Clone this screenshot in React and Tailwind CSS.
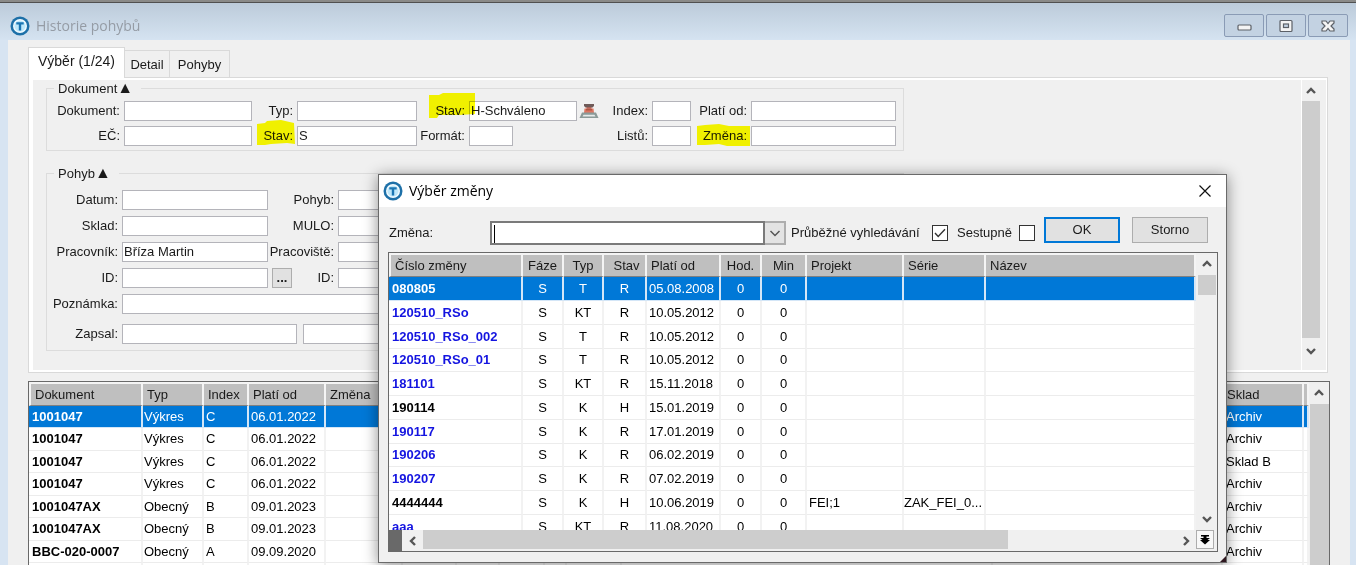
import React, { useState } from 'react';
import clsx from 'clsx';

const DOCUMENTS = [
  { code: '1001047', type: 'Výkres', index: 'C', date: '06.01.2022', store: 'Archiv' },
  { code: '1001047', type: 'Výkres', index: 'C', date: '06.01.2022', store: 'Archiv' },
  { code: '1001047', type: 'Výkres', index: 'C', date: '06.01.2022', store: 'Sklad B' },
  { code: '1001047', type: 'Výkres', index: 'C', date: '06.01.2022', store: 'Archiv' },
  { code: '1001047AX', type: 'Obecný', index: 'B', date: '09.01.2023', store: 'Archiv' },
  { code: '1001047AX', type: 'Obecný', index: 'B', date: '09.01.2023', store: 'Archiv' },
  { code: 'BBC-020-0007', type: 'Obecný', index: 'A', date: '09.09.2020', store: 'Archiv' },
  { code: '', type: '', index: '', date: '', store: '' },
];

const CHANGES = [
  { code: '080805', type: 'T', state: 'R', date: '05.08.2008' },
  { code: '120510_RSo', type: 'KT', state: 'R', date: '10.05.2012' },
  { code: '120510_RSo_002', type: 'T', state: 'R', date: '10.05.2012' },
  { code: '120510_RSo_01', type: 'T', state: 'R', date: '10.05.2012' },
  { code: '181101', type: 'KT', state: 'R', date: '15.11.2018' },
  { code: '190114', type: 'K', state: 'H', date: '15.01.2019' },
  { code: '190117', type: 'K', state: 'R', date: '17.01.2019' },
  { code: '190206', type: 'K', state: 'R', date: '06.02.2019' },
  { code: '190207', type: 'K', state: 'R', date: '07.02.2019' },
  { code: '4444444', type: 'K', state: 'H', date: '10.06.2019', project: 'FEI;1', series: 'ZAK_FEI_0...' },
  { code: 'aaa', type: 'KT', state: 'R', date: '11.08.2020' },
];

const Logo = () => (
  <svg viewBox="0 0 20 20" className="h-5 w-5 shrink-0">
    <circle cx="10" cy="10" r="9.5" fill="#1d70a8" />
    <circle cx="10" cy="10" r="7" fill="#f2fbff" />
    <circle cx="10" cy="10" r="5.6" fill="#bfe8fa" />
    <path d="M6.3 6.2h7.4v2.2h-2.5v6H8.8v-6H6.3z" fill="#1b76b3" />
  </svg>
);

const Arrow = ({ dir }) => {
  const paths = {
    up: 'M2 8 6 4l4 4',
    down: 'M2 4l4 4 4-4',
    left: 'M8 2 4 6l4 4',
    right: 'M4 2l4 4-4 4',
  };
  return (
    <svg viewBox="0 0 12 12" className="h-3 w-3" fill="none" stroke="#555" strokeWidth="2.4">
      <path d={paths[dir]} />
    </svg>
  );
};

const Stamp = () => (
  <svg viewBox="0 0 20 18" className="h-[18px] w-5">
    <path d="M5 2h10v2l-1.500 1.500h-7L5 4z" fill="#6f5a58" />
    <path d="M7.500 5h5v2h-5z" fill="#a8645a" />
    <path d="M5.500 6.500h9l.5 4.500H5z" fill="#dd7560" />
    <path d="M7 7.800h6" stroke="#a5503f" strokeWidth="1.200" />
    <path d="M3 10.500h14L19.500 16H.5z" fill="#8b9a98" />
    <path d="M4.500 12.800h11l1 1.700h-13z" fill="#e6eaea" />
  </svg>
);

// marker pen strokes laid over a label
const MARKS = {
  stavS: { box: '0 0 38 25', path: 'M0 4 8 3 10 1 24 0 37 3 38 24 30 23 14 24 8 25 0 25z', cls: 'left-[5px] -top-1.5 h-[25px] w-[38px]' },
  stavH: { box: '0 0 46 25', path: 'M0 2 10 2 14 0 46 0 46 21 30 22 10 22 8 25 0 25z', cls: 'left-3 -top-2 h-[25px] w-[46px]' },
  change: { box: '0 0 53 23', path: 'M0 2 8 1 22 0 32 2 53 2 53 22 42 22 30 22 22 20 8 21 0 21z', cls: 'left-1.5 -top-0.5 h-[23px] w-[53px]' },
};

const Field = ({ id, label, value = '', mark, className }) => (
  <>
    <label htmlFor={id} className="relative pr-1 text-right leading-5 whitespace-nowrap">
      {label}
      {mark && (
        <svg viewBox={MARKS[mark].box} className={clsx('absolute z-10 mix-blend-multiply', MARKS[mark].cls)}>
          <path d={MARKS[mark].path} fill="#ffff00" />
        </svg>
      )}
    </label>
    <input id={id} defaultValue={value} className={clsx('h-5 border border-[#b4b4ba] bg-white px-px pb-0.5 outline-none', className || 'w-full')} />
  </>
);

const Legend = ({ children }) => (
  <legend className="ml-[7px] h-4 pr-2 pl-1 leading-4">
    {children}<span className="text-base leading-4">▲</span>
  </legend>
);

const Th = ({ children, className }) => (
  <th className={clsx('overflow-hidden border-t-2 border-r-2 border-b border-t-[#f4f4f4] border-r-[#f4f4f4] border-b-[#808080] bg-[#bfbfbf] p-0 font-normal whitespace-nowrap', className)}>
    {children}
  </th>
);

const Td = ({ children, selected, className }) => (
  <td className={clsx('overflow-hidden border-r-2 border-b p-0 leading-5 whitespace-nowrap', selected ? 'border-r-[#d4e6f7] border-b-[#d4e6f7]' : 'border-r-[#f2f2f2] border-b-[#ececec]', className)}>
    {children}
  </td>
);

const DocumentsTable = () => (
  <div className="mt-2 flex min-h-0 flex-1 overflow-hidden border-x border-t border-[#696969] bg-white">
    <div className="min-w-0 flex-1 overflow-hidden">
      <table className="w-full table-fixed border-separate border-spacing-0">
        <colgroup>
          <col className="w-[114px]" />
          <col className="w-[61px]" />
          <col className="w-[45px]" />
          <col className="w-[77px]" />
          <col className="w-[77px]" />
          <col className="w-[54px]" />
          <col className="w-[43px]" />
          <col className="w-[45px]" />
          <col className="w-[22px]" />
          <col className="w-[55px]" />
          <col />
          <col className="w-[230px]" />
          <col className="w-[81px]" />
          <col className="w-[5px]" />
        </colgroup>
        <thead>
          <tr className="h-6 text-left">
            <Th className="border-l-2 border-l-[#f4f4f4] pl-1">Dokument</Th>
            <Th className="pl-1">Typ</Th>
            <Th className="pl-1">Index</Th>
            <Th className="pl-1">Platí od</Th>
            <Th className="pl-1">Změna</Th>
            <Th /><Th /><Th /><Th /><Th /><Th /><Th />
            <Th className="pl-1">Sklad</Th>
            <Th className="border-r-0" />
          </tr>
        </thead>
        <tbody>
          {DOCUMENTS.map((doc, i) => {
            const selected = i === 0;
            return (
              <tr key={i} className={clsx('odd:h-[22px] even:h-[23px]', selected ? 'bg-[#0078d7] text-white' : 'text-black')}>
                <Td selected={selected} className="pl-[3px] font-bold">{doc.code}</Td>
                <Td selected={selected} className="pl-px">{doc.type}</Td>
                <Td selected={selected} className="pl-0.5">{doc.index}</Td>
                <Td selected={selected} className="pl-0.5">{doc.date}</Td>
                {[0, 1, 2, 3, 4, 5, 6, 7].map((n) => <Td key={n} selected={selected} />)}
                <Td selected={selected} className="pl-[3px]">{doc.store}</Td>
                <Td selected={selected} className="border-r-0" />
              </tr>
            );
          })}
        </tbody>
      </table>
    </div>
    <div className="flex w-5 shrink-0 flex-col bg-[#f0f0f0]">
      <div className="flex h-[22px] items-center justify-center"><Arrow dir="up" /></div>
      <div className="ml-px flex-1 bg-[#cdcdcd]" />
    </div>
  </div>
);

const CheckField = ({ id, label, checked, onChange, className }) => (
  <div className="flex h-6 items-center">
    <label htmlFor={id} className={clsx('whitespace-nowrap', className)}>{label}</label>
    <span className="relative h-4 w-4">
      <input id={id} type="checkbox" checked={checked} onChange={onChange} className="block h-4 w-4 appearance-none border border-[#333] bg-white" />
      {checked && (
        <svg viewBox="0 0 16 16" className="pointer-events-none absolute inset-0" fill="none" stroke="#333" strokeWidth="1.4">
          <path d="M3 8l3.2 3.5L13 4.2" />
        </svg>
      )}
    </span>
  </div>
);

const ChangeDialog = () => {
  const [continuous, setContinuous] = useState(true);
  const [descending, setDescending] = useState(false);

  return (
    <div role="dialog" aria-labelledby="dialog-title" className="absolute top-[174px] left-[378px] z-20 flex h-[389px] w-[849px] flex-col border border-[#6a6a6a] bg-[#f0f0f0] shadow-[0_2px_14px_rgba(0,0,0,0.45)]">
      <div className="flex h-8 shrink-0 items-center bg-white pr-3.5 pl-1 text-black">
        <Logo />
        <h2 id="dialog-title" className="ml-1.5 flex-1 font-['Open_Sans',sans-serif] text-sm">Výběr změny</h2>
        <button aria-label="Zavřít" className="h-3.5 w-3.5">
          <svg viewBox="0 0 14 14" className="h-3.5 w-3.5" stroke="#111" strokeWidth="1.2"><path d="M1.5 1.5l11 11M12.5 1.5l-11 11" /></svg>
        </button>
      </div>

      <div className="flex h-[45px] shrink-0 items-start pt-2.5 pr-[18px] pl-2.5">
        <label htmlFor="change-search" className="mt-1 w-[101px] leading-6">Změna:</label>
        <div className="relative mt-1 flex h-6 min-w-0 flex-1">
          <input id="change-search" className="h-6 min-w-0 flex-1 border-2 border-[#7a7a7a] bg-white px-1 outline-none" />
          <span className="absolute top-1 left-1 h-[18px] w-px bg-black" />
          <button aria-label="Rozbalit" className="flex h-6 w-[21px] items-center justify-center border-y-2 border-r-2 border-[#adadad] bg-[#e3e3e3]">
            <svg viewBox="0 0 12 12" className="h-3 w-3" fill="none" stroke="#555" strokeWidth="1.5"><path d="M1.5 4 6 8.5 10.5 4" /></svg>
          </button>
        </div>
        <div className="mt-1 ml-[5px] flex gap-[9px]">
          <CheckField id="continuous" label="Průběžné vyhledávání" className="w-[141px]" checked={continuous} onChange={(e) => setContinuous(e.target.checked)} />
          <CheckField id="descending" label="Sestupně" className="w-[62px]" checked={descending} onChange={(e) => setDescending(e.target.checked)} />
        </div>
        <button className="ml-[9px] h-[26px] w-[76px] border-2 border-[#0078d7] bg-[#e1e1e1]">OK</button>
        <button className="ml-3 h-[26px] w-[76px] border border-[#adadad] bg-[#e1e1e1]">Storno</button>
      </div>

      <div className="mr-2 ml-[9px] flex h-[300px] flex-col border border-[#696969] bg-[#f0f0f0]">
        <div className="flex min-h-0 flex-1">
          <div className="min-w-0 flex-1 overflow-hidden bg-white">
            <table className="w-full table-fixed border-separate border-spacing-0">
              <colgroup>
                <col className="w-[134px]" />
                <col className="w-[41px]" />
                <col className="w-10" />
                <col className="w-[43px]" />
                <col className="w-[74px]" />
                <col className="w-[41px]" />
                <col className="w-[45px]" />
                <col className="w-[97px]" />
                <col className="w-[82px]" />
                <col />
              </colgroup>
              <thead>
                <tr className="h-6 text-left">
                  <Th className="border-l-2 border-l-[#f4f4f4] pl-1">Číslo změny</Th>
                  <Th className="text-center">Fáze</Th>
                  <Th className="text-center">Typ</Th>
                  <Th className="pl-1 text-center">Stav</Th>
                  <Th className="pl-1">Platí od</Th>
                  <Th className="text-center">Hod.</Th>
                  <Th className="text-center">Min</Th>
                  <Th className="pl-1">Projekt</Th>
                  <Th className="pl-1">Série</Th>
                  <Th className="border-r-0 pl-1">Název</Th>
                </tr>
              </thead>
              <tbody>
                {CHANGES.map((row, i) => {
                  const selected = i === 0;
                  return (
                    <tr key={row.code} className={clsx('h-6 nth-[4n]:h-[23px]', selected ? 'bg-[#0078d7] text-white' : 'text-black')}>
                      <Td selected={selected} className={clsx('pl-[3px] font-bold', !selected && row.state === 'R' && 'text-[#1414e0]')}>{row.code}</Td>
                      <Td selected={selected} className="text-center">S</Td>
                      <Td selected={selected} className="text-center">{row.type}</Td>
                      <Td selected={selected} className="text-center">{row.state}</Td>
                      <Td selected={selected} className="pl-0.5">{row.date}</Td>
                      <Td selected={selected} className="text-center">0</Td>
                      <Td selected={selected} className="text-center">0</Td>
                      <Td selected={selected} className="pl-0.5">{row.project}</Td>
                      <Td selected={selected}>{row.series}</Td>
                      <Td selected={selected} className="border-r-0" />
                    </tr>
                  );
                })}
              </tbody>
            </table>
          </div>
          <div className="flex w-[21px] shrink-0 flex-col items-center justify-between">
            <div className="flex w-full flex-col items-center">
              <div className="flex h-[22px] items-center"><Arrow dir="up" /></div>
              <div className="h-5 w-[18px] bg-[#cdcdcd]" />
            </div>
            <div className="flex h-[22px] items-center"><Arrow dir="down" /></div>
          </div>
        </div>
        <div className="flex h-[21px] shrink-0">
          <div className="w-[13px] bg-[#696969]" />
          <div className="flex w-[21px] items-center justify-center"><Arrow dir="left" /></div>
          <div className="mb-0.5 flex flex-1"><div className="w-[585px] bg-[#cdcdcd]" /></div>
          <div className="flex w-[21px] items-center justify-center"><Arrow dir="right" /></div>
          <button aria-label="Načíst vše" className="mr-[3px] mb-0.5 flex w-[18px] items-center justify-center border border-[#adadad] bg-[#f8f8f8]">
            <svg viewBox="0 0 10 10" className="h-2.5 w-2.5" fill="#000"><path d="M1 0h8v1.5H6.5V3H10L7.5 5H10L5 9.500 0 5h2.500L0 3h3.500V1.500H1z" /></svg>
          </button>
        </div>
      </div>
      <svg viewBox="0 0 6 6" className="absolute right-0 bottom-0 h-1.5 w-1.5"><path d="M6 0v6H0z" fill="#301820" /></svg>
    </div>
  );
};

const WindowButton = ({ label, children }) => (
  <button aria-label={label} className="flex h-[23px] w-10 items-center justify-center rounded-xs border border-[#8a9bb5] bg-[#c3d2e2]">
    <svg viewBox="0 0 16 14" className="h-3.5 w-4" fill="#f4f4f4" stroke="#5c6067" strokeWidth="1.2">{children}</svg>
  </button>
);

const App = () => {
  return (
    <div className="relative flex h-screen flex-col overflow-hidden bg-[#d7e4f2] font-['Liberation_Sans',Arial,sans-serif] text-[13px] text-[#1a1a1a]">
      <div className="h-[3px] shrink-0 border-b border-[#505050] bg-[#8a8a88]" />
      <header className="flex h-[37px] shrink-0 items-center justify-between bg-linear-to-b from-[#bccbda] to-[#d5e3f1] pt-2 pr-2 pl-2.5">
        <div className="flex items-center gap-1.5">
          <Logo />
          <h1 className="font-['Open_Sans',sans-serif] text-sm text-[#959ca5]">Historie pohybů</h1>
        </div>
        <div className="flex gap-0.5">
          <WindowButton label="Minimalizovat"><rect x="2" y="6" width="13" height="5" rx="1" /></WindowButton>
          <WindowButton label="Maximalizovat">
            <rect x="2" y="1.500" width="12" height="11" rx="1" />
            <rect x="5.500" y="5" width="5" height="3.500" fill="#c3d2e2" />
          </WindowButton>
          <WindowButton label="Zavřít">
            <path d="M2 2h4l2 2.500L10 2h4v2l-3 3 3 3v2h-4L8 9.500 6 12H2v-2l3-3-3-3z" />
          </WindowButton>
        </div>
      </header>

      <main className="mr-1.5 ml-2 flex min-h-0 flex-1 flex-col bg-[#f0f0f0] pt-[7px] pr-5 pl-5">
        <div role="tablist" className="flex h-[31px] shrink-0 items-end">
          <button role="tab" aria-selected="true" className="relative z-10 h-full w-[97px] border-x border-t border-[#d9d9d9] bg-white pb-1 text-sm">Výběr (1/24)</button>
          <button role="tab" aria-selected="false" className="h-7 w-[45px] border-t border-r border-[#d9d9d9]">Detail</button>
          <button role="tab" aria-selected="false" className="h-7 w-[60px] border-t border-r border-[#d9d9d9]">Pohyby</button>
        </div>

        <section className="-mt-px mr-0.5 flex shrink-0 border border-[#d9d9d9] bg-white py-0.5 pr-px pl-1">
          <div className="min-w-0 flex-1 bg-[#f0f0f0] pb-[19px] pl-[13px]">
            <fieldset className="max-w-[858px] border border-[#dcdcdc] pt-[5px] pb-1">
              <Legend>Dokument</Legend>
              <div className="grid grid-cols-[77px_128px_45px_120px_52px_108px_75px_39px_60px_145px] gap-y-[5px]">
                <Field id="doc" label="Dokument:" />
                <Field id="doc-type" label="Typ:" />
                <Field id="doc-state" label="Stav:" value="H-Schváleno" mark="stavH" />
                <div className="flex items-center justify-between pl-0.5">
                  <Stamp />
                  <label htmlFor="doc-index" className="pr-1 leading-5">Index:</label>
                </div>
                <input id="doc-index" className="h-5 w-full border border-[#b4b4ba] bg-white px-px outline-none" />
                <Field id="valid-from" label="Platí od:" />
                <Field id="ec" label="EČ:" />
                <Field id="state" label="Stav:" value="S" mark="stavS" />
                <Field id="format" label="Formát:" className="w-11" />
                <Field id="sheets" label="Listů:" />
                <Field id="change" label="Změna:" mark="change" />
              </div>
            </fieldset>

            <fieldset className="mt-3.5 max-w-[858px] border border-[#dcdcdc] pt-[9px] pb-1.5">
              <Legend>Pohyb</Legend>
              <div className="grid grid-cols-[75px_146px_70px_146px] gap-y-1.5">
                <Field id="date" label="Datum:" />
                <Field id="move" label="Pohyb:" />
                <Field id="store" label="Sklad:" />
                <Field id="mulo" label="MULO:" />
                <Field id="worker" label="Pracovník:" value="Bříza Martin" />
                <Field id="workplace" label="Pracoviště:" />
                <Field id="worker-id" label="ID:" />
                <div className="flex items-center justify-between pl-1">
                  <button aria-label="Vybrat pracovníka" className="h-5 w-5 border border-[#adadad] bg-[#e1e1e1] leading-4 font-bold">...</button>
                  <label htmlFor="place-id" className="pr-1">ID:</label>
                </div>
                <input id="place-id" className="h-5 w-full border border-[#b4b4ba] bg-white px-px outline-none" />
                <Field id="note" label="Poznámka:" className="col-span-3 w-full" />
              </div>
              <div className="mt-2.5 grid grid-cols-[75px_175px_175px] gap-x-0">
                <Field id="written" label="Zapsal:" />
                <input aria-label="Zapsal dne" className="ml-1.5 h-5 border border-[#b4b4ba] bg-white px-px outline-none" />
              </div>
            </fieldset>
          </div>
          <div className="flex w-[25px] shrink-0 flex-col border-l border-white bg-[#f0f0f0] pr-1.5 pb-1.5">
            <div className="flex h-[21px] items-center justify-center"><Arrow dir="up" /></div>
            <div className="flex-1 bg-[#cdcdcd]" />
            <div className="flex h-[26px] items-center justify-center"><Arrow dir="down" /></div>
          </div>
        </section>

        <DocumentsTable />
      </main>

      <ChangeDialog />
    </div>
  );
};

export default App;
